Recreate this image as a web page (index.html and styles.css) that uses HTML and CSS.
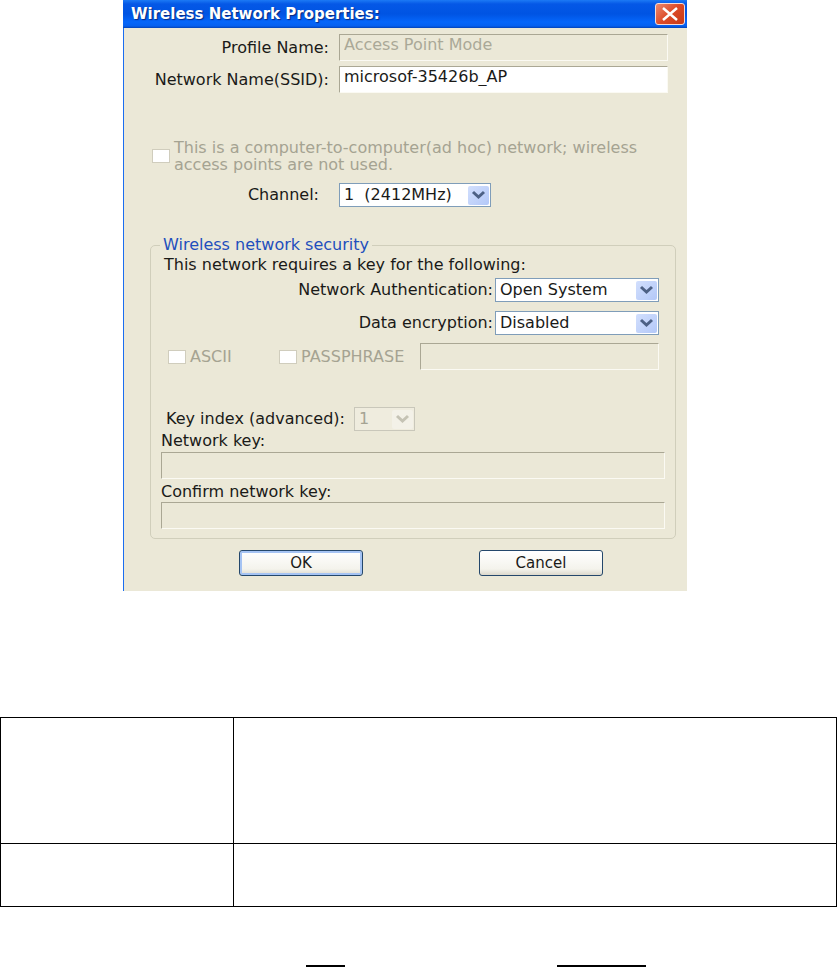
FILE: index.html
```html
<!DOCTYPE html>
<html lang="en">
<head>
<meta charset="utf-8">
<title>Wireless Network Properties</title>
<link rel="stylesheet" href="styles.css">
</head>
<body>
<main class="page">
  <form class="dialog">
    <header class="titlebar">
      <h1 class="title">Wireless Network Properties:</h1>
      <button class="close" type="button" aria-label="Close">
        <svg viewBox="0 0 28 20" width="28" height="20" aria-hidden="true"><path d="M7 4 L21 16 M21 4 L7 16" stroke="#fff" stroke-width="2.500"/></svg>
      </button>
    </header>

    <div class="content">
      <div class="row name-row">
        <label class="row-label" for="profile">Profile Name:</label>
        <input class="text" id="profile" type="text" value="Access Point Mode" disabled>
      </div>
      <div class="row name-row">
        <label class="row-label" for="ssid">Network Name(SSID):</label>
        <input class="text" id="ssid" type="text" value="microsof-35426b_AP">
      </div>

      <div class="adhoc">
        <input class="check" id="adhoc" type="checkbox" disabled>
        <label class="muted" for="adhoc">This is a computer-to-computer(ad hoc) network; wireless<br>access points are not used.</label>
      </div>

      <div class="row channel-row">
        <label class="row-label channel-label" for="channel">Channel:</label>
        <span class="combo combo-channel">
          <select id="channel"><option>1 &nbsp;(2412MHz)</option></select>
          <svg class="arrow" viewBox="0 0 21 19" aria-hidden="true"><path d="M5 6 L10.500 11 L16 6" fill="none" stroke="#4d6185" stroke-width="3"/></svg>
        </span>
      </div>

      <fieldset class="security">
        <legend>Wireless network security</legend>
        <p class="intro">This network requires a key for the following:</p>
        <div class="row auth-row">
          <label class="row-label" for="auth">Network Authentication:</label>
          <span class="combo combo-wide">
            <select id="auth"><option>Open System</option></select>
            <svg class="arrow" viewBox="0 0 21 19" aria-hidden="true"><path d="M5 6 L10.500 11 L16 6" fill="none" stroke="#4d6185" stroke-width="3"/></svg>
          </span>
        </div>
        <div class="row auth-row">
          <label class="row-label" for="enc">Data encryption:</label>
          <span class="combo combo-wide">
            <select id="enc"><option>Disabled</option></select>
            <svg class="arrow" viewBox="0 0 21 19" aria-hidden="true"><path d="M5 6 L10.500 11 L16 6" fill="none" stroke="#4d6185" stroke-width="3"/></svg>
          </span>
        </div>
        <div class="format-row">
          <span class="option ascii"><input class="check" id="ascii" type="checkbox" disabled><label class="muted" for="ascii">ASCII</label></span>
          <span class="option phrase"><input class="check" id="phrase" type="checkbox" disabled><label class="muted" for="phrase">PASSPHRASE</label></span>
          <input class="text" type="text" aria-label="Passphrase" disabled>
        </div>
        <div class="index-row">
          <label for="index">Key index (advanced):</label>
          <span class="combo combo-small">
            <select id="index" disabled><option>1</option></select>
            <svg class="arrow" viewBox="0 0 21 19" aria-hidden="true"><path d="M5 6 L10.500 11 L16 6" fill="none" stroke="#c5c3b5" stroke-width="3"/></svg>
          </span>
        </div>
        <label class="key-label" for="key">Network key:</label>
        <input class="text key" id="key" type="text" disabled>
        <label class="key-label" for="confirm">Confirm network key:</label>
        <input class="text key" id="confirm" type="text" disabled>
      </fieldset>

      <div class="actions">
        <button class="button primary" type="button">OK</button>
        <button class="button" type="button">Cancel</button>
      </div>
    </div>
  </form>

  <table class="notes">
    <tbody>
      <tr class="tall"><td class="term"></td><td></td></tr>
      <tr class="short"><td class="term"></td><td></td></tr>
    </tbody>
  </table>

  <div class="rules">
    <span class="rule rule-short"></span>
    <span class="rule rule-long"></span>
  </div>
</main>
</body>
</html>
```

FILE: styles.css
```css
* { box-sizing: border-box; }

body {
  margin: 0;
  background: #fff;
  color: #1a1a18;
  font: 16px/16px "DejaVu Sans", sans-serif;
}

input, select, button { font: inherit; color: inherit; margin: 0; }

.dialog {
  max-width: 564px;
  margin-left: 123px;
  background: #ebe8d7;
  border-left: 1px solid #1a6df0;
}

.titlebar {
  display: flex;
  align-items: center;
  justify-content: space-between;
  height: 28px;
  margin-left: -1px;
  padding: 0 2px 0 8px;
  background: linear-gradient(#1c7af5 0, #0558e6 4px, #0054e3 14px, #0566fa 22px, #0560f0 26px, #0442b5 28px);
}

.title {
  margin: 0;
  color: #fff;
  font-size: 15px;
  text-shadow: 1px 1px 1px #0a2a80;
}

.close {
  display: grid;
  place-items: center;
  width: 30px;
  height: 22px;
  padding: 0;
  border: 1px solid #f4dcd8;
  border-radius: 3px;
  background: linear-gradient(135deg, #eb8a70, #dc4a28 50%, #c63a17);
}

.content { padding: 6px 11px 15px 26px; }

.row { display: flex; align-items: center; }
.row-label { flex: 1; text-align: right; white-space: nowrap; }

.name-row { gap: 10px; margin: 0 8px 5px 0; }
.name-row .text { width: 329px; }

.text {
  height: 27px;
  padding: 0 4px 7px;
  border: 1px solid;
  border-color: #aaa794 #fbfaf3 #fbfaf3 #aaa794;
  border-radius: 0;
  background: #fff;
}
.text:disabled { background: #ebe8d7; color: #aaa897; }

.muted { color: #a5a392; }

.check {
  appearance: none;
  flex: none;
  width: 18px;
  height: 14px;
  border: 1px solid #d0cdbd;
  background: #fff;
}

.adhoc {
  display: flex;
  align-items: center;
  gap: 4px;
  margin: 46px 0 10px 2px;
  line-height: 17px;
  white-space: nowrap;
}

.channel-row { gap: 20px; margin-right: 185px; }

.combo { display: grid; flex: none; height: 24px; }
.combo select {
  grid-area: 1 / 1;
  appearance: none;
  width: 100%;
  padding: 0 4px;
  border: 1px solid #7f9db9;
  border-radius: 0;
  background: #fff;
}
.combo .arrow {
  grid-area: 1 / 1;
  align-self: center;
  justify-self: end;
  width: 21px;
  height: 19px;
  margin-right: 2px;
  border-radius: 2px;
  background: linear-gradient(135deg, #d2dffd, #b3c8f8);
  pointer-events: none;
}
.combo-channel { width: 152px; }
.combo-wide { width: 164px; }
.combo-small { width: 61px; }
.combo-small select { border-color: #c9c7ba; background: #efecde; color: #a5a392; opacity: 1; }
.combo-small .arrow { background: #f3f1e8; }

.security {
  min-width: 0;
  margin: 30px 0 0;
  padding: 4px 10px 9px;
  border: 1px solid #d0cebb;
  border-radius: 5px;
}
.security legend { margin-left: -1px; padding: 0 3px; color: #1f4fbd; }

.intro { margin: 0 0 5px 3px; }
.auth-row { gap: 2px; margin: 0 6px 9px 0; }

.format-row { display: flex; align-items: center; margin: -1px 6px 37px 7px; }
.format-row .text { flex: 1; min-width: 0; }
.option { display: flex; flex: none; align-items: center; gap: 4px; }
.ascii { width: 111px; }
.phrase { width: 141px; }

.index-row { display: flex; align-items: center; gap: 9px; margin-left: 5px; }

.key-label { display: block; margin: 2px 0 3px; }
.key { display: block; width: 100%; }
.key + .key-label { margin: 5px 0 2px; }

.actions { display: flex; gap: 116px; margin: 11px 0 0 89px; }
.button {
  width: 124px;
  height: 26px;
  padding: 0;
  border: 1px solid #24476b;
  border-radius: 3px;
  background: linear-gradient(#fff, #f4f3ec 75%, #dcd8cc);
  font-size: 15px;
}
.primary { box-shadow: inset 0 0 0 2px #a5c3f3; }

.notes {
  width: 100%;
  margin-top: 126px;
  border-collapse: collapse;
  table-layout: fixed;
}
.notes td { padding: 0; border: 1px solid #000; }
.notes .term { width: 233px; }
.tall { height: 126px; }
.short { height: 63px; }

.rules { display: flex; gap: 212px; margin: 58px 0 0 306px; }
.rule { height: 2px; background: #000; }
.rule-short { width: 39px; }
.rule-long { width: 89px; }
```
